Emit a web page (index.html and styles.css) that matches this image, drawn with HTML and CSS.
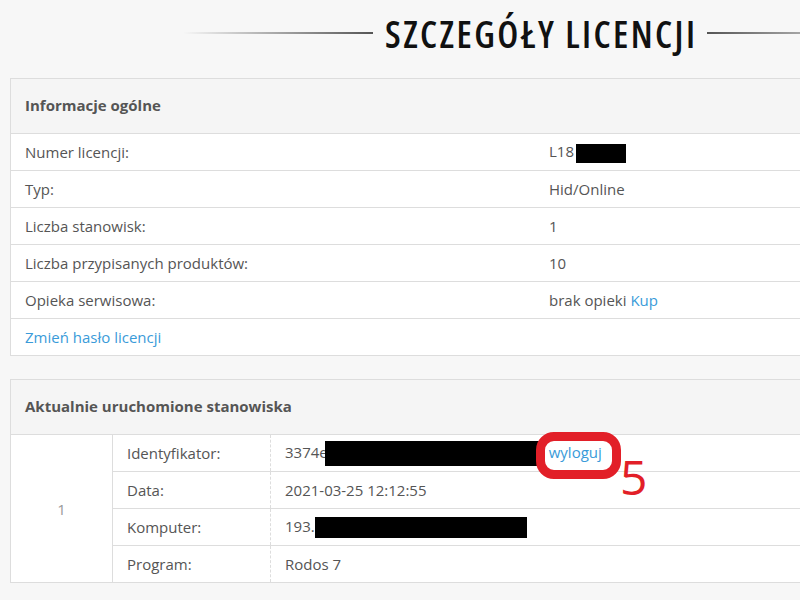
FILE: index.html
```html
<!DOCTYPE html>
<html lang="pl">
<head>
    <meta charset="UTF-8">
    <meta name="viewport" content="width=device-width, initial-scale=1.0">
    <title>Szczegóły licencji</title>
    <link rel="stylesheet" href="styles.css">
</head>
<body>
    <div class="page">
        <h1 class="title">
            <span class="title-line left"></span>
            <span class="title-text">SZCZEGÓŁY LICENCJI</span>
            <span class="title-line right"></span>
        </h1>

        <div class="panel">
            <div class="panel-heading">Informacje ogólne</div>
            <table class="info">
                <tr>
                    <td>Numer licencji:</td>
                    <td>L18<span class="redact lic"></span></td>
                </tr>
                <tr>
                    <td>Typ:</td>
                    <td>Hid/Online</td>
                </tr>
                <tr>
                    <td>Liczba stanowisk:</td>
                    <td>1</td>
                </tr>
                <tr>
                    <td>Liczba przypisanych produktów:</td>
                    <td>10</td>
                </tr>
                <tr>
                    <td>Opieka serwisowa:</td>
                    <td>brak opieki <a href="#">Kup</a></td>
                </tr>
                <tr>
                    <td colspan="2"><a href="#">Zmień hasło licencji</a></td>
                </tr>
            </table>
        </div>

        <div class="panel">
            <div class="panel-heading">Aktualnie uruchomione stanowiska</div>
            <table class="sessions">
                <tr>
                    <td class="idx" rowspan="4">1</td>
                    <td class="key">Identyfikator:</td>
                    <td class="val">3374e<span class="redact ident"></span><a class="logout" href="#">wyloguj</a></td>
                </tr>
                <tr>
                    <td class="key">Data:</td>
                    <td class="val">2021-03-25 12:12:55</td>
                </tr>
                <tr>
                    <td class="key">Komputer:</td>
                    <td class="val">193.<span class="redact host"></span></td>
                </tr>
                <tr>
                    <td class="key">Program:</td>
                    <td class="val">Rodos 7</td>
                </tr>
            </table>
        </div>

        <!-- adnotacja na zrzucie -->
        <div class="mark"></div>
        <div class="mark-num">5</div>
    </div>
</body>
</html>
```

FILE: styles.css
```css
html, body {
    margin: 0;
    overflow: hidden;
}
body {
    background: #f7f7f7;
    font-family: "Open Sans", "Liberation Sans", sans-serif;
    font-size: 15px;
    color: #555;
}
a {
    color: #3a9bd9;
    text-decoration: none;
}
.page {
    position: relative;
    width: 1060px;
    margin-left: 10px;
}
.title {
    display: flex;
    align-items: center;
    justify-content: center;
    gap: 12px;
    height: 66px;
    margin: 0 0 12px;
}
.title-text {
    font-size: 37px;
    font-weight: 600;
    font-stretch: 87.5%;
    letter-spacing: 2.4px;
    margin-right: -2.4px;
    color: #111;
}
.title-line {
    width: 190px;
    height: 2px;
}
.title-line.left {
    background: linear-gradient(to right, rgba(85,85,85,0), #555);
}
.title-line.right {
    background: linear-gradient(to right, #555, rgba(85,85,85,0));
}
.panel {
    background: #fff;
    border: 1px solid #ddd;
    margin-bottom: 23px;
}
.panel-heading {
    height: 54px;
    line-height: 52px;
    padding: 0 14px;
    background: #f5f5f5;
    border-bottom: 1px solid #ddd;
    font-weight: 700;
    color: #555;
}
table {
    width: 100%;
    border-collapse: collapse;
}
td {
    height: 36px;
    padding: 0 14px;
    border-top: 1px solid #ddd;
    vertical-align: middle;
}
tr:first-child td {
    border-top: none;
}
.info td:first-child {
    width: 496px;
}
.sessions .idx {
    width: 73px;
    text-align: center;
    color: #999;
    border-right: 1px solid #ddd;
}
.sessions .key {
    width: 129px;
    border-right: 1px dashed #ddd;
}
.redact {
    display: inline-block;
    background: #000;
    vertical-align: middle;
}
.redact.lic {
    width: 50px;
    height: 19px;
    margin-left: 2px;
}
.redact.ident {
    width: 214px;
    height: 25px;
    margin-left: -3px;
    margin-right: 10px;
}
.redact.host {
    width: 212px;
    height: 21px;
}
.mark {
    position: absolute;
    left: 526px;
    top: 432px;
    width: 67px;
    height: 29px;
    border: 9px solid #e21f28;
    border-radius: 18px;
}
.mark-num {
    position: absolute;
    left: 610px;
    top: 453px;
    font-size: 48px;
    line-height: 1;
    color: #e21f28;
}
```
